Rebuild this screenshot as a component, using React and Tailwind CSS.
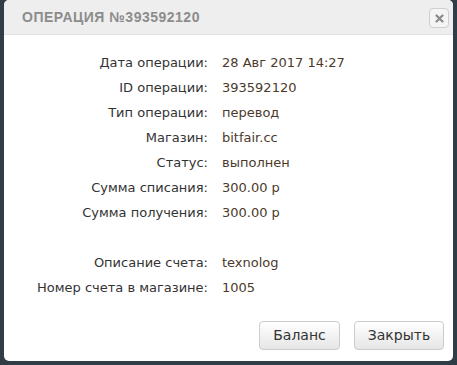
import React from "react";

const ROWS = [
  ["Дата операции:", "28 Авг 2017 14:27"],
  ["ID операции:", "393592120"],
  ["Тип операции:", "перевод"],
  ["Магазин:", "bitfair.cc"],
  ["Статус:", "выполнен"],
  ["Сумма списания:", "300.00 р"],
  ["Сумма получения:", "300.00 р"],
  null,
  ["Описание счета:", "texnolog"],
  ["Номер счета в магазине:", "1005"],
];

export default function App() {
  return (
    <div className="w-[457px] h-[365px] bg-[#2f3e46] overflow-hidden">
      <div className="ml-[4px] w-[449px] h-[361px] bg-white rounded-[5px] overflow-hidden flex flex-col">
        {/* header */}
        <div className="h-[35px] bg-[#eeeeee] border-b border-[#e2e2e2] flex items-center justify-between pl-[18px] pr-[4px]">
          <h2 className="text-[14px] font-bold tracking-[0.5px] text-[#8c8c8c]" style={{ fontFamily: '"Liberation Sans", sans-serif' }}>
            ОПЕРАЦИЯ №393592120
          </h2>
          <button className="w-[20px] h-[20px] mt-[2px] rounded-[4px] border border-[#cfcfcf] bg-[#f4f4f4] flex items-center justify-center">
            <svg width="9" height="9" viewBox="0 0 9 9">
              <path d="M1.5 1.5 L7.5 7.5 M7.5 1.5 L1.5 7.5" stroke="#8a8a8a" strokeWidth="2.2" strokeLinecap="round" />
            </svg>
          </button>
        </div>

        {/* body */}
        <div className="pt-[15px] flex-1" style={{ fontFamily: '"DejaVu Sans", sans-serif' }}>
          {ROWS.map((r, i) =>
            r ? (
              <div key={i} className="h-[25px] flex items-center text-[13px]">
                <div className="w-[204px] text-right text-[#333]">{r[0]}</div>
                <div className="pl-[14px] text-[#4b3a2c]">{r[1]}</div>
              </div>
            ) : (
              <div key={i} className="h-[25px]" />
            )
          )}
        </div>

        {/* footer */}
        <div className="flex justify-end gap-[14px] pr-[9px] pb-[11px]" style={{ fontFamily: '"DejaVu Sans", sans-serif' }}>
          <button className="w-[81px] h-[29px] rounded-[4px] border border-[#cccccc] bg-gradient-to-b from-white to-[#e6e6e6] text-[14px] text-[#333]">
            Баланс
          </button>
          <button className="w-[90px] h-[29px] rounded-[4px] border border-[#cccccc] bg-gradient-to-b from-white to-[#e6e6e6] text-[14px] text-[#333]">
            Закрыть
          </button>
        </div>
      </div>
    </div>
  );
}
